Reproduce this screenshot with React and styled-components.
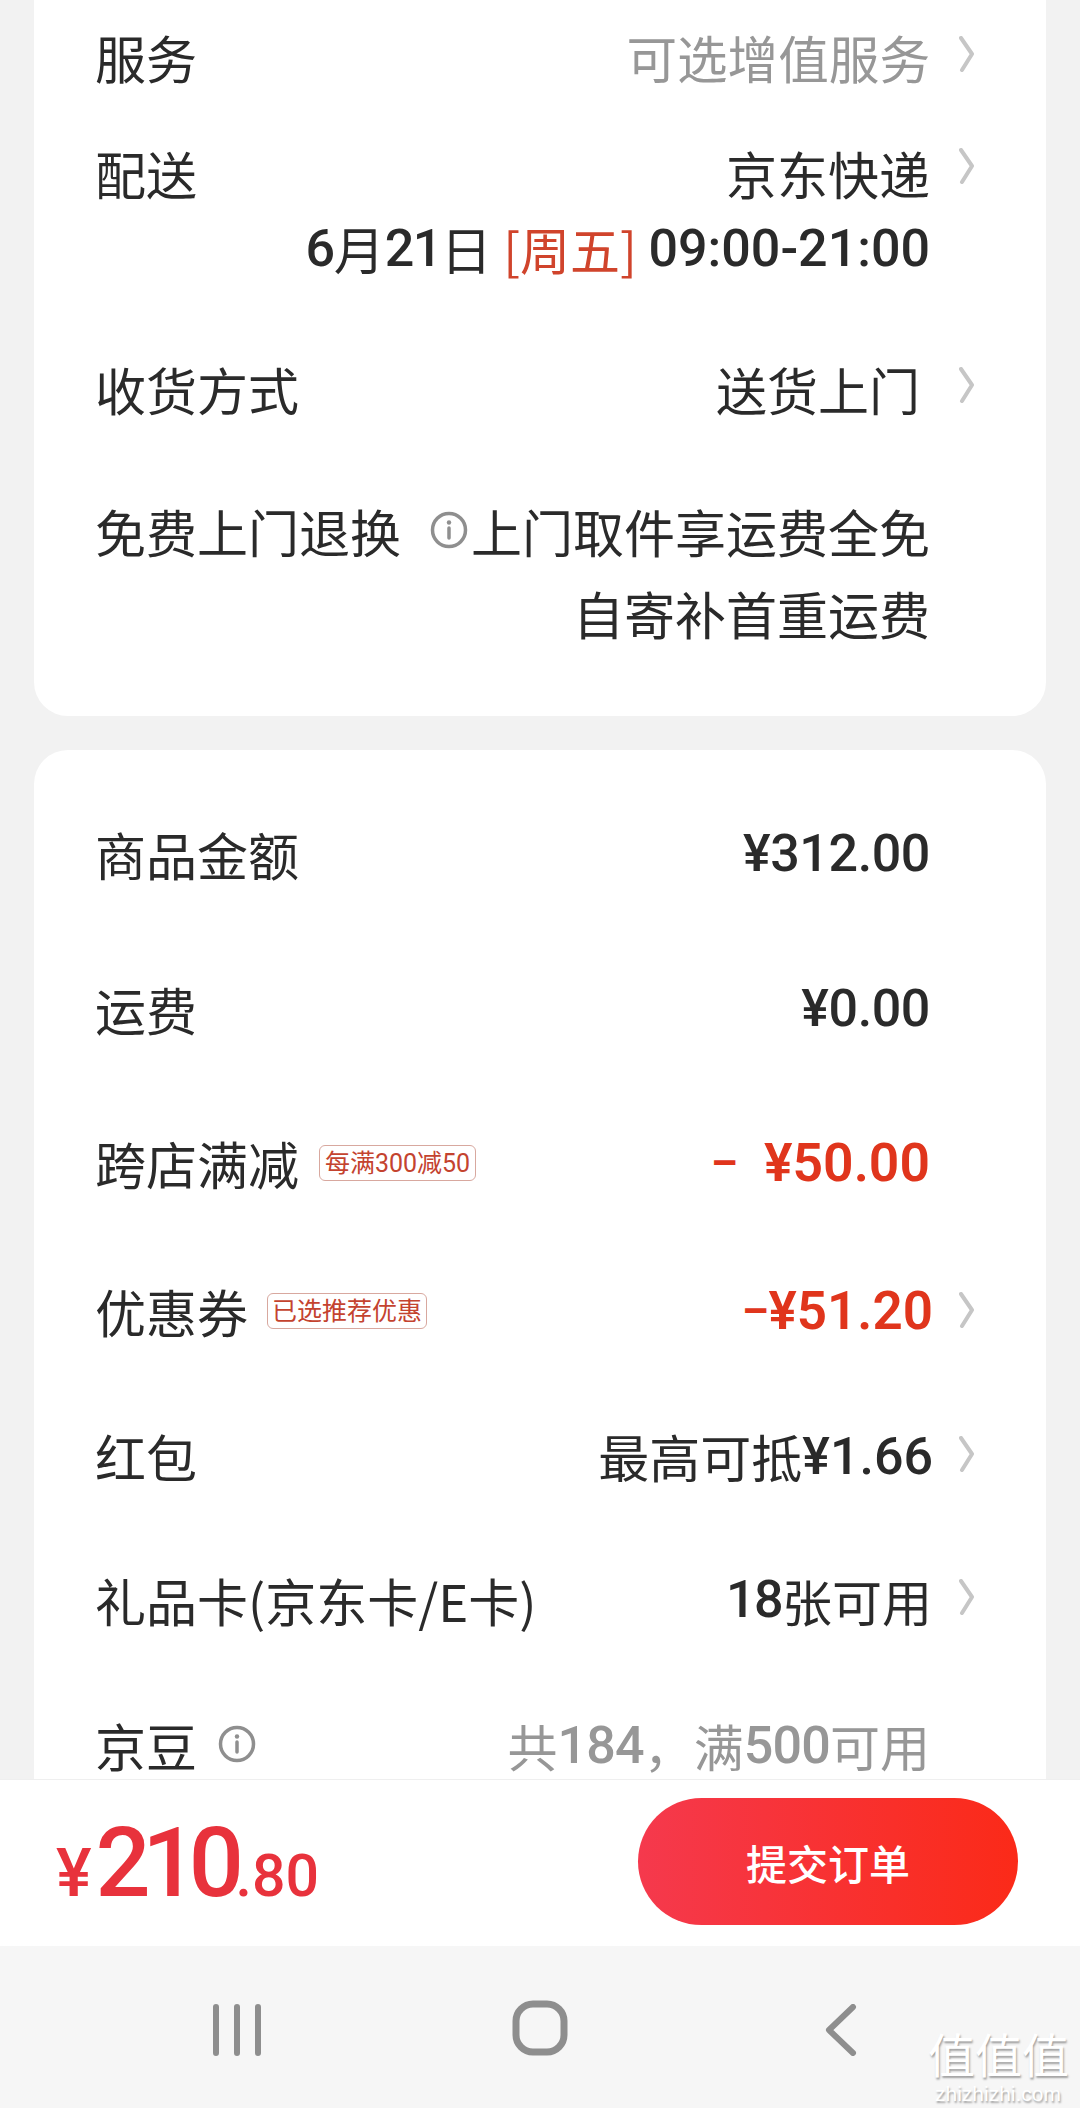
import React from "react";
import styled, { createGlobalStyle } from "styled-components";

const Global = createGlobalStyle`
  html, body { margin: 0; padding: 0; background: #f2f2f2; }
  * { box-sizing: border-box; }
`;

const FONT = `"Noto Sans CJK SC", "Noto Sans", sans-serif`;
const NUM = `Roboto, "Noto Sans CJK SC", sans-serif`;

const Page = styled.div`
  position: relative;
  width: 1080px;
  height: 2108px;
  display: flex;
  flex-direction: column;
  overflow: hidden;
  background: #f2f2f2;
  font-family: ${FONT};
  color: #2a2a2a;
`;
const Scroller = styled.main`
  flex: 1;
  min-height: 0;
  overflow: hidden;
  padding: 0 34px;
`;
const Card = styled.section`
  background: #fff;
  border-radius: ${(p) => (p.$flat ? "0 0 34px 34px" : "34px")};
  padding: ${(p) => p.$pad};
  margin-bottom: 34px;
`;
const Row = styled.div`
  display: flex;
  justify-content: space-between;
  align-items: flex-start;
  margin-top: ${(p) => p.$gap || 0}px;
  padding: 0 71px 0 61px;
`;
const Label = styled.div`
  display: flex;
  align-items: center;
  height: 60px;
  font-size: 51px;
  line-height: 60px;
  white-space: nowrap;
`;
const Right = styled.div`
  display: flex;
  align-items: flex-start;
`;
const ValueStack = styled.div`
  display: flex;
  flex-direction: column;
  align-items: flex-end;
`;
const Value = styled.div`
  height: 60px;
  font-size: ${(p) => p.$size || 51}px;
  line-height: 60px;
  white-space: pre;
  text-align: right;
  margin-top: ${(p) => p.$gap || 0}px;
  margin-right: ${(p) => p.$end || 0}px;
  color: ${(p) => p.$color || "#2a2a2a"};
`;
const Num = styled.span`
  font-family: ${NUM};
  font-weight: ${(p) => p.$weight || 500};
  font-size: ${(p) => p.$size || 52}px;
  line-height: 1;
  vertical-align: ${(p) => p.$rise ?? 4}px;
  margin-right: ${(p) => p.$after || 0}px;
  color: ${(p) => p.$color || "inherit"};
  letter-spacing: ${(p) => p.$track || 0}px;
`;
const Accent = styled.span`
  color: #d0442c;
  font-size: 50px;
`;
const ChevronSlot = styled.div`
  width: 45px;
  height: 60px;
  display: flex;
  justify-content: flex-end;
  padding-top: ${(p) => p.$top ?? 9}px;
`;
const Tag = styled.span`
  display: inline-flex;
  align-items: center;
  justify-content: center;
  width: ${(p) => p.$w}px;
  height: 36px;
  margin-left: ${(p) => p.$gap}px;
  margin-top: 0;
  border: 1.5px solid #d8a89f;
  border-radius: 6px;
  font-size: ${(p) => p.$size}px;
  line-height: 1;
  color: #c4432f;
  font-family: ${NUM};
  white-space: nowrap;
`;
const InfoWrap = styled.span`
  display: inline-flex;
  margin-left: ${(p) => p.$gap}px;
  margin-top: -2px;
`;

const Footer = styled.footer`
  height: 167px;
  flex: none;
  background: #fff;
  border-top: 1px solid #efefef;
  display: flex;
  align-items: flex-start;
  justify-content: space-between;
  padding: 18px 62px 0 56px;
`;
const Price = styled.div`
  display: flex;
  align-items: baseline;
  color: #e8323c;
  font-family: ${NUM};
  font-weight: 600;
  line-height: 100px;
  margin-top: 17px;
`;
const Submit = styled.button`
  width: 380px;
  height: 127px;
  border: 0;
  border-radius: 64px;
  background: linear-gradient(90deg, #f5394d 0%, #fb2a18 100%);
  color: #fff;
  font-family: ${FONT};
  font-weight: 500;
  font-size: 41px;
`;
const Nav = styled.nav`
  height: 162px;
  flex: none;
  background: #f6f6f6;
`;
const NavSlot = styled.div`
  position: absolute;
  bottom: 52px;
  left: ${(p) => p.$x}px;
  display: flex;
`;
const Stamp = styled.div`
  position: absolute;
  right: 12px;
  bottom: 2px;
  width: 140px;
  text-align: center;
  color: #fff;
  text-shadow: 1px 2px 2px #a0a0a0;
  font-family: ${FONT};
`;
const StampMark = styled.div`
  font-size: 47px;
  line-height: 58px;
  white-space: nowrap;
`;
const StampUrl = styled.div`
  font-family: "Liberation Sans", sans-serif;
  font-size: 21px;
  line-height: 24px;
`;

const Chevron = ({ top }) => (
  <ChevronSlot $top={top}>
    <svg width="16" height="36" viewBox="0 0 16 36" fill="none">
      <path d="M2 2 L13 18 L3 34" stroke="#c6c6c6" strokeWidth="4" strokeLinecap="round" strokeLinejoin="round" />
    </svg>
  </ChevronSlot>
);

const Info = ({ gap }) => (
  <InfoWrap $gap={gap}>
    <svg width="38" height="38" viewBox="0 0 38 38" fill="none">
      <circle cx="19" cy="19" r="16.5" stroke="#8f8f8f" strokeWidth="3.5" />
      <circle cx="19" cy="11.5" r="2.2" fill="#8f8f8f" />
      <path d="M19 17 V27" stroke="#8f8f8f" strokeWidth="3.5" strokeLinecap="round" />
    </svg>
  </InfoWrap>
);

export default function App() {
  return (
    <Page>
      <Global />
      <Scroller>
        <Card $flat $pad="27px 0 73px">
          <Row>
            <Label>服务</Label>
            <Right>
              <Value $color="#979797" $size={50.6}>可选增值服务</Value>
              <Chevron />
            </Right>
          </Row>
          <Row $gap={56}>
            <Label>配送</Label>
            <Right>
              <ValueStack>
                <Value>京东快递</Value>
                <Value $gap={15}>
                  <Num $track={-1.5}>6</Num>月<Num $track={-1.5}>21</Num>日 <Accent>[周五]</Accent> <Num>09:00-21:00</Num>
                </Value>
              </ValueStack>
              <Chevron top={5} />
            </Right>
          </Row>
          <Row $gap={81}>
            <Label>收货方式</Label>
            <Right>
              <Value $end={10}>送货上门</Value>
              <Chevron top={8} />
            </Right>
          </Row>
          <Row $gap={82}>
            <Label>
              免费上门退换
              <Info gap={29} />
            </Label>
            <Right>
              <ValueStack>
                <Value>上门取件享运费全免</Value>
                <Value $gap={22}>自寄补首重运费</Value>
              </ValueStack>
              <ChevronSlot />
            </Right>
          </Row>
        </Card>
        <Card $pad="74px 0 40px">
          <Row>
            <Label>商品金额</Label>
            <Right>
              <Value><Num $track={-0.4} $rise={5}>¥312.00</Num></Value>
              <ChevronSlot />
            </Right>
          </Row>
          <Row $gap={95}>
            <Label>运费</Label>
            <Right>
              <Value><Num $track={-0.4} $rise={5}>¥0.00</Num></Value>
              <ChevronSlot />
            </Right>
          </Row>
          <Row $gap={94}>
            <Label>
              跨店满减
              <Tag $w={157} $gap={20} $size={25}>每满300减50</Tag>
            </Label>
            <Right>
              <Value>
                <Num $color="#e0351c" $weight={700} $size={42} $rise={7}>–</Num>
                <Num $color="#e0351c" $weight={600} $size={53.5}>{"  ¥50.00"}</Num>
              </Value>
              <ChevronSlot />
            </Right>
          </Row>
          <Row $gap={88}>
            <Label>
              优惠券
              <Tag $w={160} $gap={19} $size={25}>已选推荐优惠</Tag>
            </Label>
            <Right>
              <Value $end={-3}>
                <Num $color="#e0351c" $weight={700} $size={42} $rise={7}>–</Num>
                <Num $color="#e0351c" $weight={600} $size={53}>¥51.20</Num>
              </Value>
              <Chevron top={11} />
            </Right>
          </Row>
          <Row $gap={85}>
            <Label>红包</Label>
            <Right>
              <Value $end={-3}>最高可抵<Num>¥1.66</Num></Value>
              <Chevron top={10} />
            </Right>
          </Row>
          <Row $gap={84}>
            <Label>礼品卡(京东卡/E卡)</Label>
            <Right>
              <Value $size={50} $end={-2}><Num $track={-1.5} $rise={5}>18</Num>张可用</Value>
              <Chevron />
            </Right>
          </Row>
          <Row $gap={85}>
            <Label>
              京豆
              <Info gap={21} />
            </Label>
            <Right>
              <Value $color="#979797" $size={50}>共<Num $track={-0.8}>184</Num>，满<Num $track={-0.8}>500</Num>可用</Value>
              <ChevronSlot />
            </Right>
          </Row>
        </Card>
      </Scroller>
      <Footer>
        <Price>
          <Num $size={67} $rise={0} $after={4}>¥</Num>
          <Num $size={97} $track={-8.5} $rise={0}>210</Num>
          <Num $size={59} $rise={0}>.80</Num>
        </Price>
        <Submit>提交订单</Submit>
      </Footer>
      <Nav />
      <NavSlot $x={212}>
        <svg width="50" height="52" viewBox="0 0 50 52" fill="none" stroke="#8e8e8e" strokeWidth="6" strokeLinecap="round">
          <path d="M4 3 V49 M25 3 V49 M46 3 V49" />
        </svg>
      </NavSlot>
      <NavSlot $x={511}>
        <svg width="58" height="56" viewBox="0 0 58 56" fill="none" stroke="#8e8e8e" strokeWidth="7">
          <rect x="5" y="4" width="48" height="48" rx="17" />
        </svg>
      </NavSlot>
      <NavSlot $x={824}>
        <svg width="34" height="52" viewBox="0 0 34 52" fill="none" stroke="#8e8e8e" strokeWidth="6" strokeLinecap="round" strokeLinejoin="round">
          <path d="M29 3 L5 26 L29 49" />
        </svg>
      </NavSlot>
      <Stamp>
        <StampMark>值值值</StampMark>
        <StampUrl>zhizhizhi.com</StampUrl>
      </Stamp>
    </Page>
  );
}
